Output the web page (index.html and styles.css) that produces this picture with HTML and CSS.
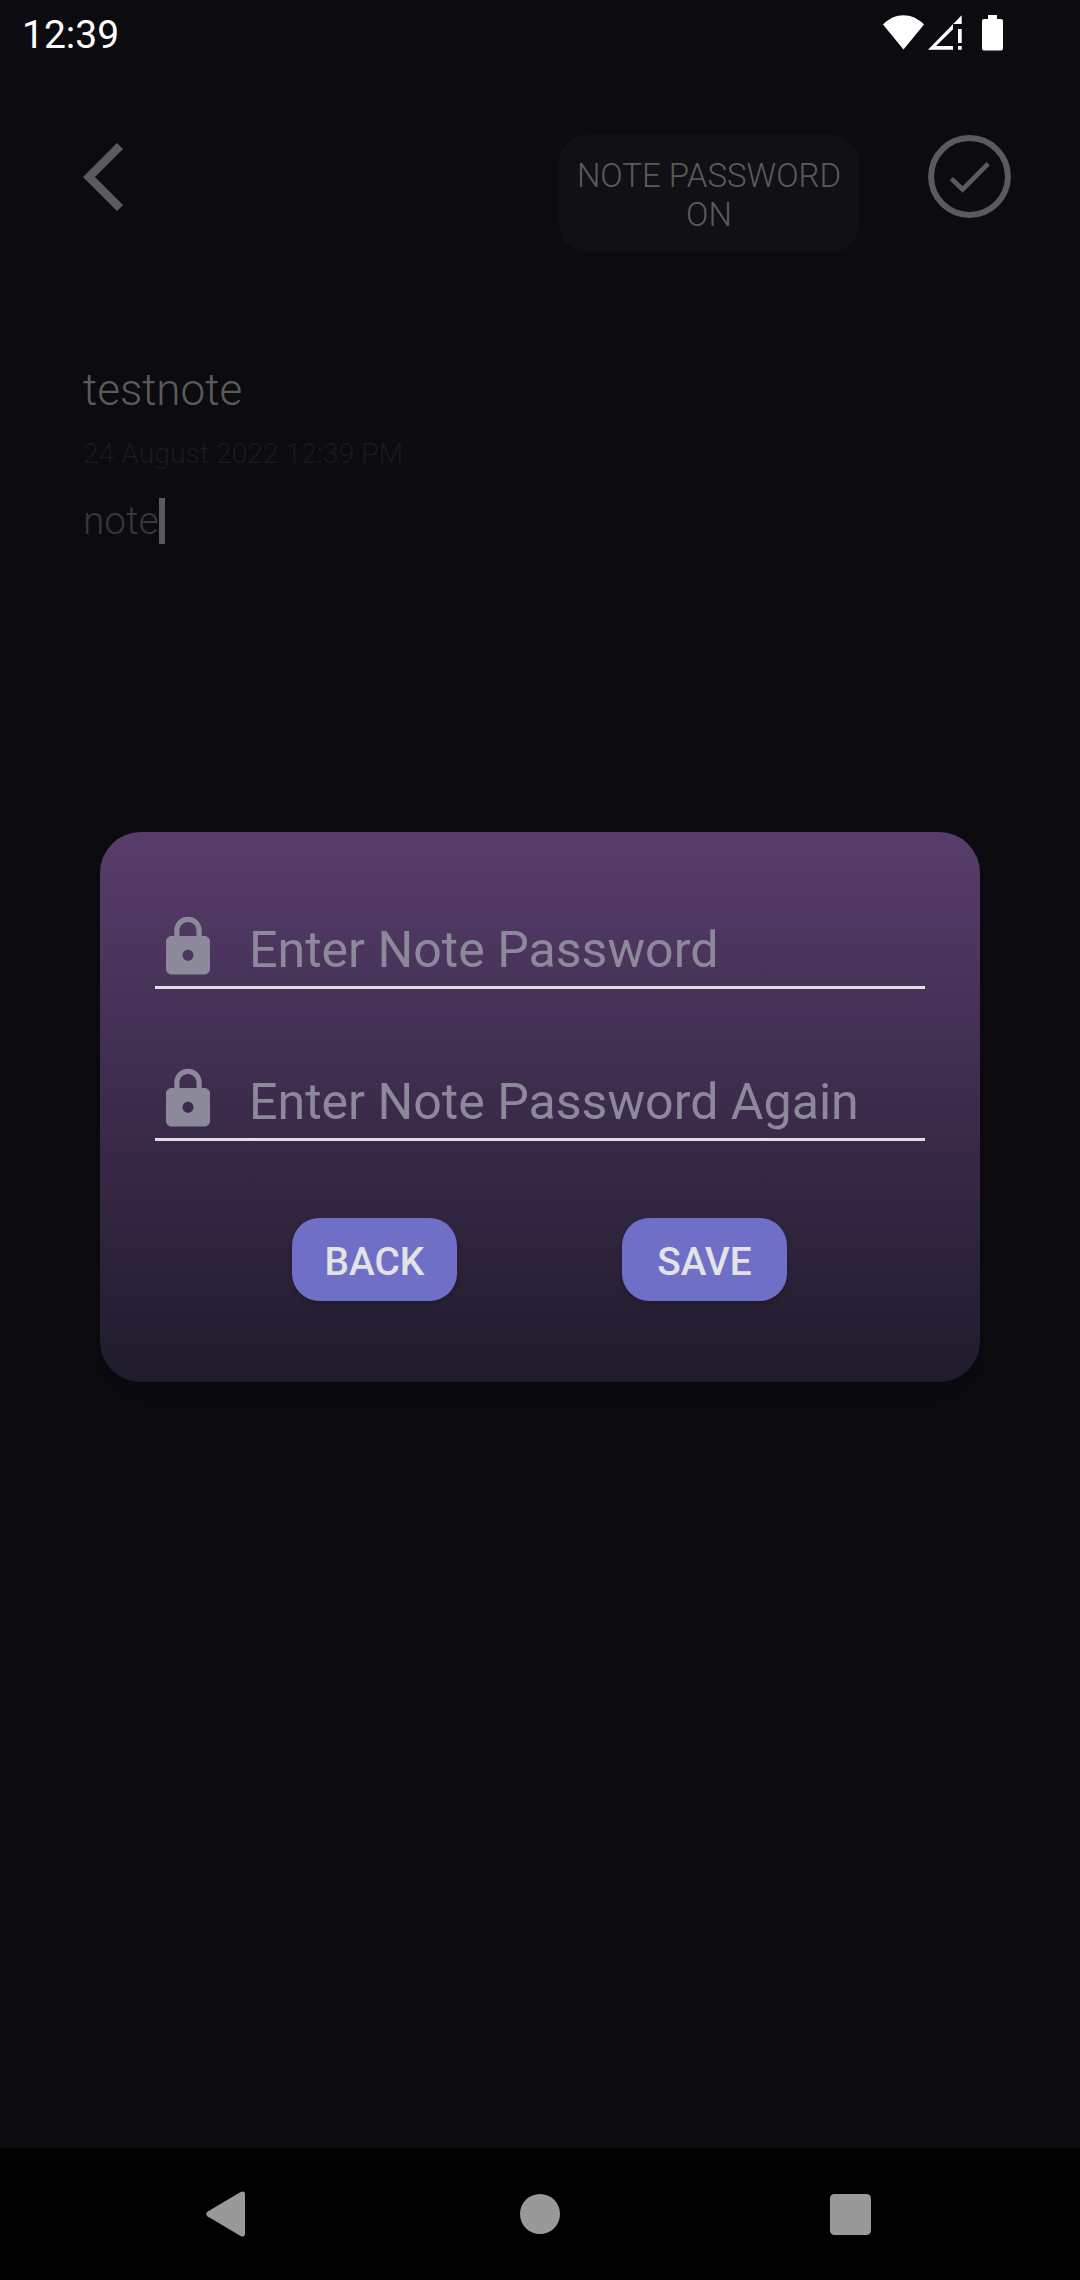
FILE: index.html
```html
<!DOCTYPE html>
<html lang="en">
<head>
<meta charset="utf-8">
<title>Note</title>
<link rel="stylesheet" href="styles.css">
</head>
<body>
<div class="screen">
  <header class="status">
    <span class="clock">12:39</span>
    <svg class="status-icons" viewBox="0 0 124 40" width="124" height="40">
      <path d="M0 9.5C12-2.9 29-2.9 41 9.5L20.5 34.5Z"/>
      <path d="M45 34.7L78.7.3V9H70V14.3L53 31H70V34.7H45ZM75 14H78.7V28H75ZM75 31H78.7V34.7H75Z"/>
      <path d="M105 0H114V4H118Q120 4 120 6V33.5Q120 35.5 118 35.5H101Q99 35.5 99 33.5V6Q99 4 101 4H105Z"/>
    </svg>
  </header>

  <nav class="toolbar">
    <svg class="back" viewBox="0 0 40 68" width="40" height="68"><path d="M34 0L40 6 12 34 40 62 34 68 0 34Z"/></svg>
    <div class="chip">NOTE PASSWORD<br>ON</div>
    <svg class="done" viewBox="0 0 83 83" width="83" height="83">
      <circle cx="41.5" cy="41.5" r="38.4"/>
      <path d="M23.4 43.6L34.6 54.4 60.2 28.600"/>
    </svg>
  </nav>

  <main class="note">
    <h1 class="title">testnote</h1>
    <p class="date">24 August 2022 12:39 PM</p>
    <p class="body"><span>note</span><i class="caret"></i></p>
  </main>

  <footer class="navbar">
    <svg viewBox="0 0 39 46" width="39" height="46"><path d="M1.400 20.800L34.600 1.100Q39-.8 39 3.600V42.400Q39 46.800 34.600 44.900L1.400 25.200Q-1 23 1.400 20.800Z"/></svg>
    <svg viewBox="0 0 40 40" width="40" height="40"><circle cx="20" cy="20" r="20"/></svg>
    <svg viewBox="0 0 41 41" width="41" height="41"><rect width="41" height="41" rx="4.5"/></svg>
  </footer>

  <section class="dialog">
    <div class="field">
      <svg viewBox="0 0 24 24" width="66" height="66"><path d="M18 8h-1V6c0-2.76-2.24-5-5-5S7 3.240 7 6v2H6c-1.100 0-2 .9-2 2v10c0 1.100.9 2 2 2h12c1.100 0 2-.9 2-2V10c0-1.100-.9-2-2-2zm-6 9c-1.100 0-2-.9-2-2s.9-2 2-2 2 .9 2 2-.9 2-2 2zm3.100-9H8.900V6c0-1.710 1.390-3.100 3.100-3.100s3.100 1.390 3.100 3.100v2z"/></svg>
      <span>Enter Note Password</span>
    </div>
    <div class="field">
      <svg viewBox="0 0 24 24" width="66" height="66"><path d="M18 8h-1V6c0-2.76-2.24-5-5-5S7 3.240 7 6v2H6c-1.100 0-2 .9-2 2v10c0 1.100.9 2 2 2h12c1.100 0 2-.9 2-2V10c0-1.100-.9-2-2-2zm-6 9c-1.100 0-2-.9-2-2s.9-2 2-2 2 .9 2 2-.9 2-2 2zm3.100-9H8.900V6c0-1.710 1.390-3.100 3.100-3.100s3.100 1.390 3.100 3.100v2z"/></svg>
      <span>Enter Note Password Again</span>
    </div>
    <div class="actions">
      <button class="btn">BACK</button>
      <button class="btn">SAVE</button>
    </div>
  </section>
</div>
</body>
</html>
```
FILE: styles.css
```css
* { box-sizing: border-box; margin: 0; padding: 0; }
body { background: #0c0b10; font-family: Roboto, sans-serif; }
svg { display: block; flex: none; }

.screen {
  position: relative;
  display: flex;
  flex-direction: column;
  width: 1080px;
  height: 2280px;
  overflow: hidden;
  background: #0c0b10;
}

.status {
  display: flex;
  justify-content: space-between;
  height: 66px;
  padding: 11px 73px 0 22px;
}
.clock { padding-top: 1px; font-size: 39px; line-height: 46px; color: #fff; }
.status-icons { margin-top: 4px; fill: #fff; }

.toolbar {
  display: flex;
  align-items: flex-start;
  height: 187px;
  padding: 69px 69px 0 83px;
}
.back { margin-top: 8px; fill: #5b5b5b; }
.chip {
  width: 300px;
  height: 117px;
  margin-left: auto;
  padding-top: 21px;
  border-radius: 27px;
  background: #111015;
  color: #5b5b5b;
  font-size: 33px;
  font-weight: 300;
  line-height: 39px;
  text-align: center;
}
.done { margin-left: 69px; fill: none; stroke: #5b5b5b; stroke-width: 6; }
.done path { stroke-width: 4.6; }

.note { flex: 1; padding: 111px 83px 0; font-weight: 300; }
.title { font-size: 44px; font-weight: 300; line-height: 52px; color: #5b5b5b; }
.date { margin-top: 21px; font-size: 28.3px; line-height: 34px; color: #1b1a1f; }
.body {
  display: flex;
  align-items: center;
  height: 46px;
  margin-top: 27px;
  font-size: 38.8px;
  line-height: 46px;
  color: #38373b;
}
.caret { width: 6px; height: 46px; background: #5b5b5b; }

.navbar {
  display: grid;
  grid-template-columns: 39px 1fr 41px;
  align-items: center;
  height: 132px;
  padding: 0 209px 0 206px;
  background: #000;
  fill: #999;
}
.navbar svg:nth-child(2) { margin-left: 275px; }

/* modal over the note */
.dialog {
  position: absolute;
  left: 100px;
  top: 832px;
  width: 880px;
  height: 550px;
  padding: 82px 55px 0;
  border-radius: 41px;
  background: linear-gradient(#583d6b, #1f1b2c);
  box-shadow: 0 18px 34px rgba(0, 0, 0, .2);
}
.field {
  display: flex;
  gap: 28px;
  height: 75px;
  border-bottom: 3px solid #e2dfe4;
  color: #8c899b;
  fill: #8c899b;
  font-size: 50.1px;
  line-height: 58px;
  white-space: nowrap;
}
.field + .field { margin-top: 77px; }
.field span { padding-top: 7px; }
.actions {
  display: flex;
  gap: 165px;
  margin: 77px 0 0 137px;
}
.btn {
  width: 165px;
  height: 83px;
  padding-top: 4px;
  border: 0;
  border-radius: 27.5px;
  background: #706fc8;
  box-shadow: 0 2px 5px rgba(0, 0, 0, .2);
  color: #e3e3e3;
  font: 500 38.8px/45px Roboto, sans-serif;
}
```
